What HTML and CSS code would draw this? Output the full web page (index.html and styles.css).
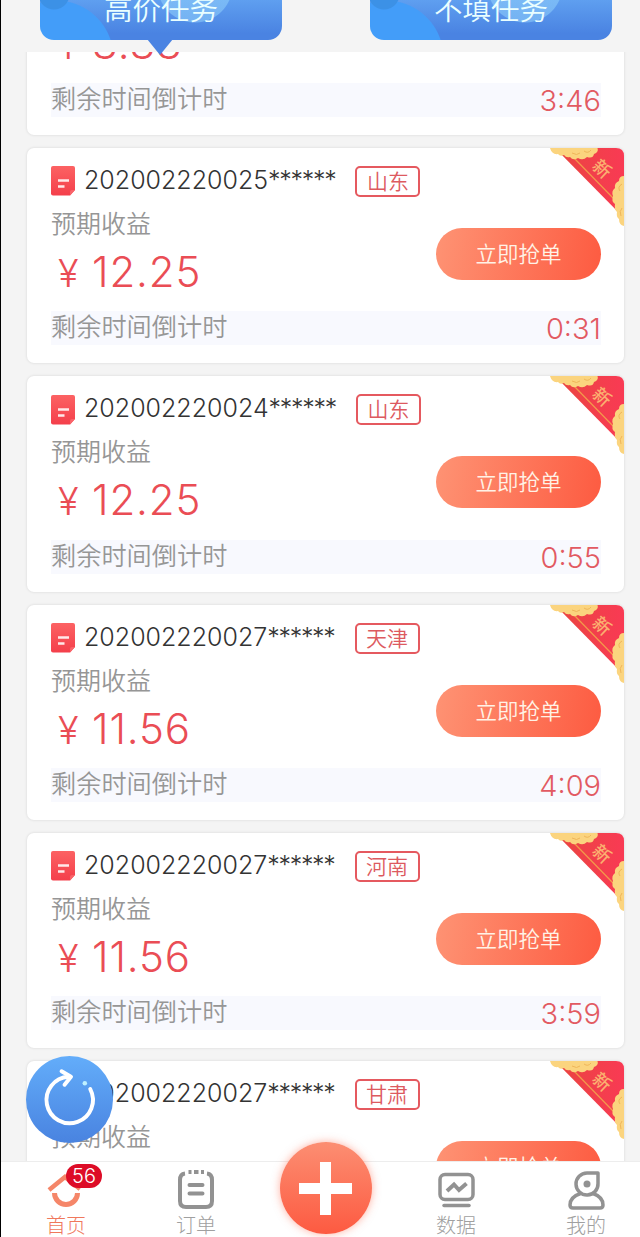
FILE: index.html
```
<!DOCTYPE html>
<html lang="zh-CN">
<head>
  <meta charset="UTF-8">
  <title>任务大厅</title>
  <link rel="stylesheet" href="styles.css">
</head>
<body>
  <!-- Shared icons -->
  <svg class="defs" width="0" height="0">
    <defs>
      <linearGradient id="red" x1="0" y1="0" x2="0" y2="1">
        <stop offset="0" stop-color="#fc6263"/>
        <stop offset="1" stop-color="#f43f4b"/>
      </linearGradient>
      <linearGradient id="ribbonRed" x1="0" y1="0" x2="1" y2="0">
        <stop offset="0" stop-color="#e9463f"/>
        <stop offset="1" stop-color="#f93a54"/>
      </linearGradient>
    </defs>
    <symbol id="doc" viewBox="0 0 24 30">
      <path d="M2 0H22Q24 0 24 2V24L19 29.500H2Q0 29.500 0 27.500V2Q0 0 2 0Z" fill="url(#red)"/>
      <path d="M24 24L19 29.500V26Q19 24 21 24Z" fill="#f9646a"/>
      <path d="M7 14.500H18M7 20.500H13.500" stroke="#ffe9e9" stroke-width="2.500"/>
    </symbol>
    <symbol id="ribbon" viewBox="0 0 74 80">
      <path d="M5 0H66Q74 0 74 8V70Z" fill="url(#ribbonRed)"/>
      <path d="M24 10L63 50" stroke="#f39a4b" stroke-width="1.200"/>
      <path d="M0 0H47.500Q49 4 44 6Q43 11 37 9Q33 13 28 10Q23 13 20 9Q16 10 14 7Q10 9 8 6Q2 7 0 0Z" fill="#fbd47e"/>
      <path d="M22 5Q27 8 30 5M34 3Q38 6 41 2" fill="none" stroke="#efb65a" stroke-width="1"/>
      <path d="M74 28Q69 28 69 33Q64 35 65 40Q61 43 63 48Q61 53 65 56Q64 61 67 64Q66 69 69 71Q69 77 74 78Z" fill="#fbd47e"/>
      <path d="M72 36Q67 39 70 43M72 60Q69 63 71 68" fill="none" stroke="#efb65a" stroke-width="1"/>
      <text x="0" y="0" transform="translate(52 21) rotate(43)" text-anchor="middle" dominant-baseline="central" class="ribbon-text">新</text>
    </symbol>
  </svg>

  <div class="app">
    <header class="tabs">
      <div class="tab active">高价任务</div>
      <div class="tab">不填任务</div>
    </header>

    <main class="list">
      <div class="card">
        <div class="card-head"></div>
        <div class="card-body">
          <div>
            <div class="label"></div>
            <div class="price"><span class="yen">¥</span>8.88</div>
          </div>
        </div>
        <div class="countdown"><span>剩余时间倒计时</span><span class="time">3:46</span></div>
      </div>

      <div class="card">
        <svg class="ribbon"><use href="#ribbon"/></svg>
        <div class="card-head">
          <svg class="doc"><use href="#doc"/></svg>
          <span class="order">202002220025<i>******</i></span>
          <span class="city">山东</span>
        </div>
        <div class="card-body">
          <div>
            <div class="label">预期收益</div>
            <div class="price"><span class="yen">¥</span>12.25</div>
          </div>
          <button class="grab">立即抢单</button>
        </div>
        <div class="countdown"><span>剩余时间倒计时</span><span class="time">0:31</span></div>
      </div>

      <div class="card">
        <svg class="ribbon"><use href="#ribbon"/></svg>
        <div class="card-head">
          <svg class="doc"><use href="#doc"/></svg>
          <span class="order">202002220024<i>******</i></span>
          <span class="city">山东</span>
        </div>
        <div class="card-body">
          <div>
            <div class="label">预期收益</div>
            <div class="price"><span class="yen">¥</span>12.25</div>
          </div>
          <button class="grab">立即抢单</button>
        </div>
        <div class="countdown"><span>剩余时间倒计时</span><span class="time">0:55</span></div>
      </div>

      <div class="card">
        <svg class="ribbon"><use href="#ribbon"/></svg>
        <div class="card-head">
          <svg class="doc"><use href="#doc"/></svg>
          <span class="order">202002220027<i>******</i></span>
          <span class="city">天津</span>
        </div>
        <div class="card-body">
          <div>
            <div class="label">预期收益</div>
            <div class="price"><span class="yen">¥</span>11.56</div>
          </div>
          <button class="grab">立即抢单</button>
        </div>
        <div class="countdown"><span>剩余时间倒计时</span><span class="time">4:09</span></div>
      </div>

      <div class="card">
        <svg class="ribbon"><use href="#ribbon"/></svg>
        <div class="card-head">
          <svg class="doc"><use href="#doc"/></svg>
          <span class="order">202002220027<i>******</i></span>
          <span class="city">河南</span>
        </div>
        <div class="card-body">
          <div>
            <div class="label">预期收益</div>
            <div class="price"><span class="yen">¥</span>11.56</div>
          </div>
          <button class="grab">立即抢单</button>
        </div>
        <div class="countdown"><span>剩余时间倒计时</span><span class="time">3:59</span></div>
      </div>

      <div class="card">
        <svg class="ribbon"><use href="#ribbon"/></svg>
        <div class="card-head">
          <svg class="doc"><use href="#doc"/></svg>
          <span class="order">202002220027<i>******</i></span>
          <span class="city">甘肃</span>
        </div>
        <div class="card-body">
          <div>
            <div class="label">预期收益</div>
          </div>
          <button class="grab">立即抢单</button>
        </div>
      </div>
    </main>

    <!-- Refresh -->
    <div class="refresh">
      <svg width="87" height="87" viewBox="0 0 88 88" fill="none" stroke="#fff" stroke-width="4" stroke-linecap="round">
        <path d="M65 33.500A23.500 23.500 0 1 1 43 21"/>
        <path d="M36 15.500L45.500 21L39 29" stroke-linejoin="round"/>
        <circle cx="59.500" cy="27.500" r="2.300" fill="#bff0ff" stroke="none"/>
      </svg>
    </div>

    <nav class="nav">
      <div class="nav-item current">
        <svg width="40" height="40" viewBox="0 0 40 40" fill="none" stroke="#f58669" stroke-width="4.500">
          <path d="M3 20L19 7L34 19"/>
          <path d="M8.500 23A11.500 11.500 0 0 0 31.500 23" stroke-width="5"/>
        </svg>
        <span class="badge">56</span>
        <span>首页</span>
      </div>
      <div class="nav-item">
        <svg width="40" height="40" viewBox="0 0 40 40" fill="none" stroke="#929292" stroke-width="4">
          <path d="M9 3.500Q4 4 4 10V31Q4 37 10 37H30Q36 37 36 31V10Q36 4 31 3.500"/>
          <path d="M12.500 2H15.500M18 2H22.500M25 2H28"/>
          <path d="M13.500 15H26.500M13.500 23.500H26.500" stroke-linecap="round"/>
        </svg>
        <span>订单</span>
      </div>
      <div class="nav-item"><div class="plus"></div></div>
      <div class="nav-item">
        <svg width="40" height="40" viewBox="0 0 40 40" fill="none" stroke="#929292" stroke-width="3.500">
          <rect x="4" y="4.500" width="33" height="25" rx="5"/>
          <path d="M11 21L18 14.500L23 20L30.500 13.500" stroke-width="4"/>
          <path d="M8 35.500H33" stroke-linecap="round"/>
        </svg>
        <span>数据</span>
      </div>
      <div class="nav-item">
        <svg width="40" height="40" viewBox="0 0 40 40" fill="none" stroke="#929292" stroke-width="3.500" stroke-linejoin="round">
          <path d="M21 3H32V13.500A11 11 0 1 1 21 3Z"/>
          <circle cx="21" cy="14" r="3.500" fill="#929292" stroke="none"/>
          <path d="M14.500 23.500Q4 27 4 35Q4 38 7 38H34Q37 38 37 35Q37 27 27 23.500"/>
        </svg>
        <span>我的</span>
      </div>
    </nav>
  </div>
</body>
</html>
```

FILE: styles.css
```
* {
  box-sizing: border-box;
}
body {
  margin: 0;
  font-family: Inter, "Noto Sans CJK SC", sans-serif;
  font-weight: 300;
  background: #f4f4f4;
}
.defs {
  position: absolute;
}
.app {
  position: relative;
  display: flex;
  flex-direction: column;
  width: 640px;
  height: 1237px;
  overflow: hidden;
  border-left: 1px solid #000;
}

/* Top tabs */
.tabs {
  flex: none;
  display: flex;
  justify-content: space-between;
  align-items: flex-end;
  height: 52px;
  padding: 0 28px 12px 39px;
}
.tab {
  position: relative;
  width: 242px;
  height: 80px;
  padding-top: 32px;
  border-radius: 14px;
  background:
    radial-gradient(circle at 14px 34px, #64aef5 0 4px, #3c91e6 5px 15px, transparent 16px),
    radial-gradient(circle at 16px 98px, #439df9 0 57px, transparent 58px),
    radial-gradient(circle at 155px 25px, rgba(140, 203, 250, .6) 0 37px, transparent 38px),
    linear-gradient(#70b6fb 15%, #4a83e2 92%);
  color: #eaffff;
  font-size: 28.500px;
  font-weight: 350;
  line-height: 36px;
  text-align: center;
}
.tab.active::after {
  content: "";
  position: absolute;
  z-index: 2;
  left: 107px;
  top: 79px;
  border: 13px solid transparent;
  border-top: 16px solid #4a83e2;
  border-bottom: 0;
}

/* Task list */
.list {
  flex: 1;
  min-height: 0;
  overflow: hidden;
  padding: 0 16px 0 26px;
}
.card {
  position: relative;
  height: 215.300px;
  margin-bottom: 13px;
  padding: 0 23px 0 24px;
  border-radius: 7px;
  background: #fff;
  box-shadow: 0 0 3px rgba(0, 0, 0, .13);
}
.card:first-child {
  margin-top: -132.400px;
}
.ribbon {
  position: absolute;
  top: 0;
  right: 0;
  width: 74px;
  height: 80px;
}
.ribbon-text {
  font-size: 18px;
  font-weight: 500;
  fill: #fbb070;
}
.card-head {
  display: flex;
  align-items: center;
  height: 63px;
  padding-top: 4px;
}
.doc {
  width: 24px;
  height: 30px;
  margin-right: 9px;
}
.order {
  padding-bottom: 3px;
  font-size: 25px;
  color: #333;
  white-space: nowrap;
}
.order i {
  font-style: normal;
  letter-spacing: -1.300px;
}
.city {
  margin-left: 20px;
  width: 65px;
  height: 31px;
  border: 2px solid #e5595f;
  border-radius: 5px;
  color: #dd5a5f;
  font-size: 21px;
  font-weight: 350;
  line-height: 28px;
  text-align: center;
}
.card-body {
  display: flex;
  justify-content: space-between;
  height: 100.500px;
}
.label {
  height: 26px;
  color: #969696;
  font-size: 25px;
  font-weight: 350;
  line-height: 26px;
}
.price {
  margin-top: 8px;
  padding-left: 7px;
  color: #ea4d55;
  font-size: 42px;
  letter-spacing: .9px;
  line-height: 54px;
}
.yen {
  display: inline-block;
  width: 34px;
  font-size: 38px;
}
.grab {
  width: 165px;
  height: 52px;
  margin-top: 17px;
  padding: 0 0 3px;
  border: 0;
  border-radius: 26px;
  background: linear-gradient(100deg, #fe9374, #fd5b41);
  color: #fff2e6;
  font: inherit;
  font-size: 21.500px;
  font-weight: 350;
}
.countdown {
  display: flex;
  justify-content: space-between;
  height: 34px;
  background: #f8f9fe;
  color: #969696;
  font-size: 25.200px;
  font-weight: 350;
  line-height: 33px;
}
.time {
  color: #e25a62;
  font-size: 29px;
  font-weight: 300;
  line-height: 36px;
}

.refresh {
  position: absolute;
  left: 25px;
  top: 1056px;
  width: 87px;
  height: 87px;
  border-radius: 50%;
  background: linear-gradient(#63adfa, #4983e0);
}

/* Bottom navigation */
.nav {
  position: relative;
  flex: none;
  display: flex;
  height: 76px;
  border-top: 1px solid #ededed;
  background: #fff;
}
.nav-item {
  position: relative;
  flex: none;
  display: flex;
  flex-direction: column;
  align-items: center;
  width: 130px;
  padding-top: 8px;
  color: #a0a0a0;
  font-size: 20px;
  line-height: 32px;
}
.nav-item svg {
  flex: none;
}
.current {
  color: #f0785c;
}
.badge {
  position: absolute;
  left: 65px;
  top: 2px;
  width: 36px;
  height: 24px;
  border-radius: 12px;
  background: #dd0c27;
  color: #fff;
  font-size: 20px;
  line-height: 24px;
  text-align: center;
}
.plus {
  position: relative;
  flex: none;
  width: 92px;
  height: 92px;
  margin: -28px 1px 0 0;
  border-radius: 50%;
  background:
    linear-gradient(#fff, #fff) center / 53px 11px no-repeat,
    linear-gradient(#fff, #fff) center / 11px 53px no-repeat,
    linear-gradient(#fc8e72, #fd5a41);
  box-shadow: 0 0 8px rgba(253, 100, 70, .5);
}
```
